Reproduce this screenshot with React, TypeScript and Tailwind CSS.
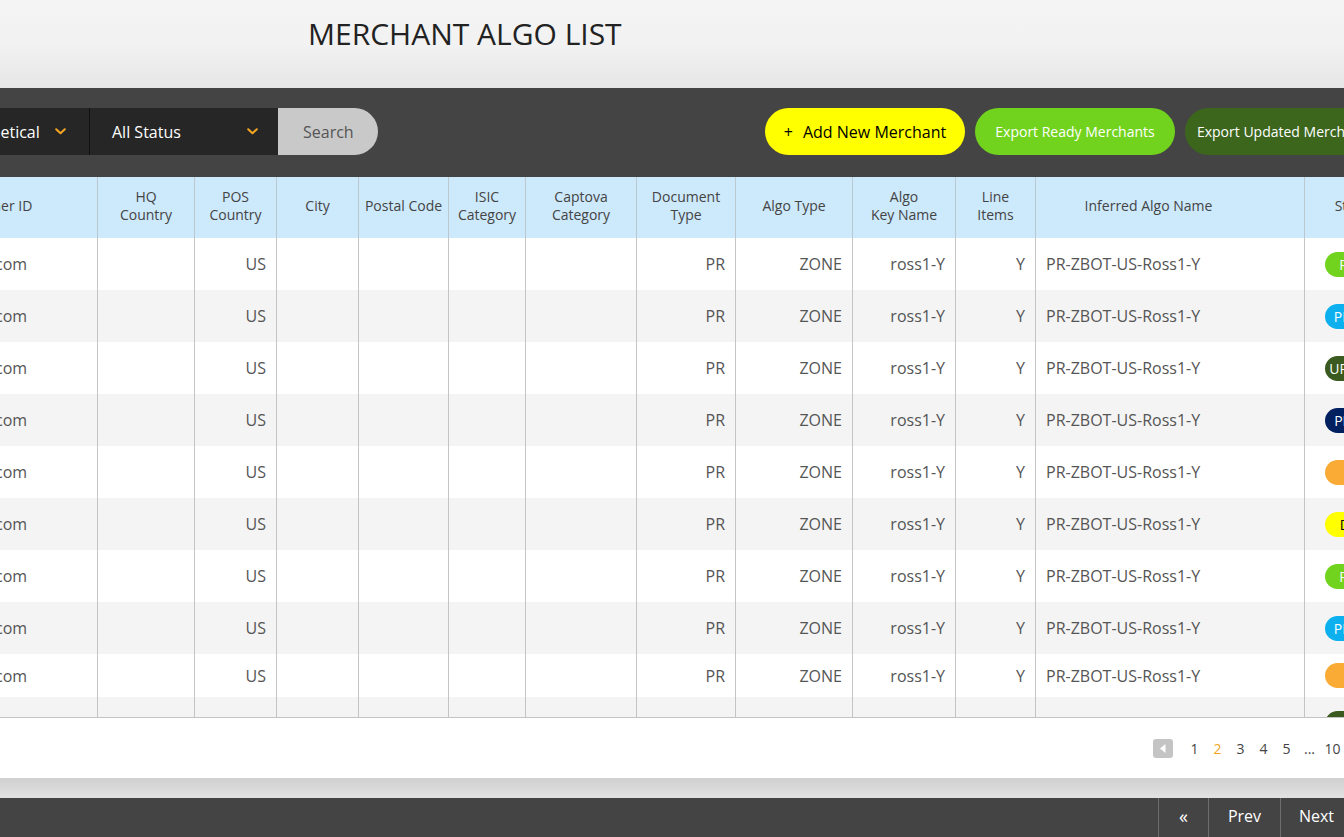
import React from "react";

type Col = { label: string[]; w: string; align: "left" | "right" | "center"; hcls?: string };

const cols: Col[] = [
  { label: ["Customer ID"], w: "w-[212px]", align: "left" },
  { label: ["HQ", "Country"], w: "w-[97px]", align: "right" },
  { label: ["POS", "Country"], w: "w-[82px]", align: "right" },
  { label: ["City"], w: "w-[82px]", align: "left" },
  { label: ["Postal Code"], w: "w-[90px]", align: "left" },
  { label: ["ISIC", "Category"], w: "w-[77px]", align: "left" },
  { label: ["Captova", "Category"], w: "w-[111px]", align: "left" },
  { label: ["Document", "Type"], w: "w-[99px]", align: "right" },
  { label: ["Algo Type"], w: "w-[117px]", align: "right" },
  { label: ["Algo", "Key Name"], w: "w-[103px]", align: "right" },
  { label: ["Line", "Items"], w: "w-[80px]", align: "right" },
  { label: ["Inferred Algo Name"], w: "w-[269px]", align: "left", hcls: "pr-[43px]" },
  { label: ["Status"], w: "w-[100px]", align: "left" },
];

type Status = { text: string; cls: string };
const statuses: Status[] = [
  { text: "READY", cls: "bg-[#72d31e] text-white" },
  { text: "PRICING", cls: "bg-[#0cb0ef] text-white" },
  { text: "UPDATED", cls: "bg-[#3a5a1f] text-white" },
  { text: "PRIVATE", cls: "bg-[#002060] text-white" },
  { text: "NEW", cls: "bg-[#f9ab35] text-white" },
  { text: "DRAFT", cls: "bg-[#ffff00] text-black" },
  { text: "READY", cls: "bg-[#72d31e] text-white" },
  { text: "PRICING", cls: "bg-[#0cb0ef] text-white" },
  { text: "NEW", cls: "bg-[#f9ab35] text-white" },
  { text: "UPDATED", cls: "bg-[#3a5a1f] text-white" },
];

const rowHeights = ["h-[52px]", "h-[52px]", "h-[52px]", "h-[52px]", "h-[52px]", "h-[52px]", "h-[52px]", "h-[52px]", "h-[43px]", "h-[52px]"];

function Chevron() {
  return (
    <svg width="11" height="7" viewBox="0 0 11 7" fill="none">
      <path d="M1.2 1.2 L5.5 5.3 L9.8 1.2" stroke="#f5a623" strokeWidth="2" strokeLinecap="round" strokeLinejoin="round" />
    </svg>
  );
}

function Row({ i }: { i: number }) {
  const s = statuses[i];
  const values = [
    "orders@ross.com",
    "",
    "US",
    "",
    "",
    "",
    "",
    "PR",
    "ZONE",
    "ross1-Y",
    "Y",
    "PR-ZBOT-US-Ross1-Y",
  ];
  return (
    <div className={`flex ${rowHeights[i]} ${i % 2 === 0 ? "bg-white" : "bg-[#f4f4f4]"}`}>
      {cols.map((c, ci) => {
        if (ci === cols.length - 1) {
          return (
            <div key={ci} className={`${c.w} shrink-0 flex items-center pl-[20px]`}>
              <span
                className={`w-[72px] h-[25px] shrink-0 rounded-full flex items-center justify-center text-[14px] font-medium ${s.cls}`}
              >
                {s.text}
              </span>
            </div>
          );
        }
        return (
          <div
            key={ci}
            className={`${c.w} shrink-0 border-r border-[#c4c4c4] flex items-center px-[10px] text-[16px] text-[#555] ${
              c.align === "right" ? "justify-end" : "justify-start"
            }`}
          >
            <span className="whitespace-nowrap">{values[ci]}</span>
          </div>
        );
      })}
    </div>
  );
}

export default function App() {
  return (
    <div className="w-[1344px] h-[837px] overflow-hidden bg-white font-['Open_Sans',sans-serif] flex flex-col">
      {/* Title area */}
      <div className="h-[88px] shrink-0 bg-gradient-to-b from-[#f4f4f4] via-[#f2f2f2] to-[#e6e6e6] pl-[308px] pt-[14px]">
        <h1 className="text-[30px] leading-[40px] text-[#222] font-normal">MERCHANT ALGO LIST</h1>
      </div>

      {/* Toolbar */}
      <div className="h-[89px] shrink-0 bg-[#444444] overflow-hidden">
        <div className="w-[1479px] -ml-[74px] pt-[20px] pr-[20px] flex justify-between">
          <div className="flex h-[47px]">
            <div className="w-[164px] bg-[#262626] flex items-center justify-between pl-[22px] pr-[23px] text-[16px] text-white border-r border-[#111]">
              <span>Alphabetical</span>
              <Chevron />
            </div>
            <div className="w-[188px] bg-[#262626] flex items-center justify-between pl-[22px] pr-[20px] text-[16px] text-white">
              <span>All Status</span>
              <Chevron />
            </div>
            <div className="w-[100px] bg-[#c9c9c9] rounded-r-full flex items-center pl-[25px] text-[16px] text-[#555]">
              Search
            </div>
          </div>
          <div className="flex gap-[10px] h-[47px]">
            <div className="w-[200px] rounded-full bg-[#ffff00] flex items-center justify-center text-[16px] text-black">
              <span className="mr-[10px]">+</span>
              <span>Add New Merchant</span>
            </div>
            <div className="w-[200px] rounded-full bg-[#72d31e] flex items-center justify-center text-[14px] text-white">
              Export Ready Merchants
            </div>
            <div className="w-[200px] rounded-full bg-[#3b661c] flex items-center justify-center text-[14px] text-white">
              Export Updated Merchants
            </div>
          </div>
        </div>
      </div>

      {/* Table */}
      <div className="shrink-0 overflow-hidden border-b border-[#c4c4c4]">
        <div className="-ml-[114px] w-[1560px]">
          <div className="flex h-[61px] bg-[#cde9fc]">
            {cols.map((c, ci) => (
              <div
                key={ci}
                className={`${c.w} shrink-0 ${ci === cols.length - 1 ? "" : "border-r border-[#bcc8d0]"} ${c.hcls ?? ""} flex flex-col items-center justify-center pb-[4px] text-[14px] leading-[18px] text-[#444]`}
              >
                {c.label.map((l, li) => (
                  <span key={li} className="whitespace-nowrap">
                    {l}
                  </span>
                ))}
              </div>
            ))}
          </div>
          <div className="h-[479px] overflow-hidden">
            {statuses.map((_, i) => (
              <Row key={i} i={i} />
            ))}
          </div>
        </div>
      </div>

      {/* Pagination */}
      <div className="h-[60px] shrink-0 bg-white overflow-hidden">
        <div className="w-[1394px] h-full flex items-center justify-end pr-[20px]">
          <div className="w-[20px] h-[19px] rounded-[3px] bg-[#c4c4c4] flex items-center justify-center">
            <svg width="20" height="19" viewBox="0 0 20 19">
              <path d="M12.5 5 L7 9.5 L12.5 14 Z" fill="#fff" />
            </svg>
          </div>
          <div className="ml-[10px] flex text-[14px] text-[#444]">
            <span className="w-[23px] text-center">1</span>
            <span className="w-[23px] text-center text-[#f5a623]">2</span>
            <span className="w-[23px] text-center">3</span>
            <span className="w-[23px] text-center">4</span>
            <span className="w-[23px] text-center">5</span>
            <span className="w-[23px] text-center">...</span>
            <span className="w-[23px] text-center">10</span>
          </div>
          <div className="ml-[10px] w-[20px] h-[19px] rounded-[3px] bg-[#c4c4c4] flex items-center justify-center">
            <svg width="20" height="19" viewBox="0 0 20 19">
              <path d="M7.5 5 L13 9.5 L7.5 14 Z" fill="#fff" />
            </svg>
          </div>
        </div>
      </div>

      {/* Gradient separator */}
      <div className="h-[20px] shrink-0 bg-gradient-to-b from-[#d0d0d0] to-[#e2e2e2]" />

      {/* Footer bar */}
      <div className="flex-1 bg-[#444444] overflow-hidden">
        <div className="w-[1402px] h-full flex justify-end">
          <div className="w-[50px] h-full border-l border-[#6e6e6e] flex items-center justify-center pb-[3px] text-[18px] text-white">
            «
          </div>
          <div className="w-[72px] h-full border-l border-[#6e6e6e] flex items-center justify-center pb-[3px] text-[16px] text-white">
            Prev
          </div>
          <div className="w-[72px] h-full border-l border-[#6e6e6e] flex items-center justify-center pb-[3px] text-[16px] text-white">
            Next
          </div>
          <div className="w-[50px] h-full border-l border-[#6e6e6e] flex items-center justify-center pb-[3px] text-[18px] text-white">
            »
          </div>
        </div>
      </div>
    </div>
  );
}
